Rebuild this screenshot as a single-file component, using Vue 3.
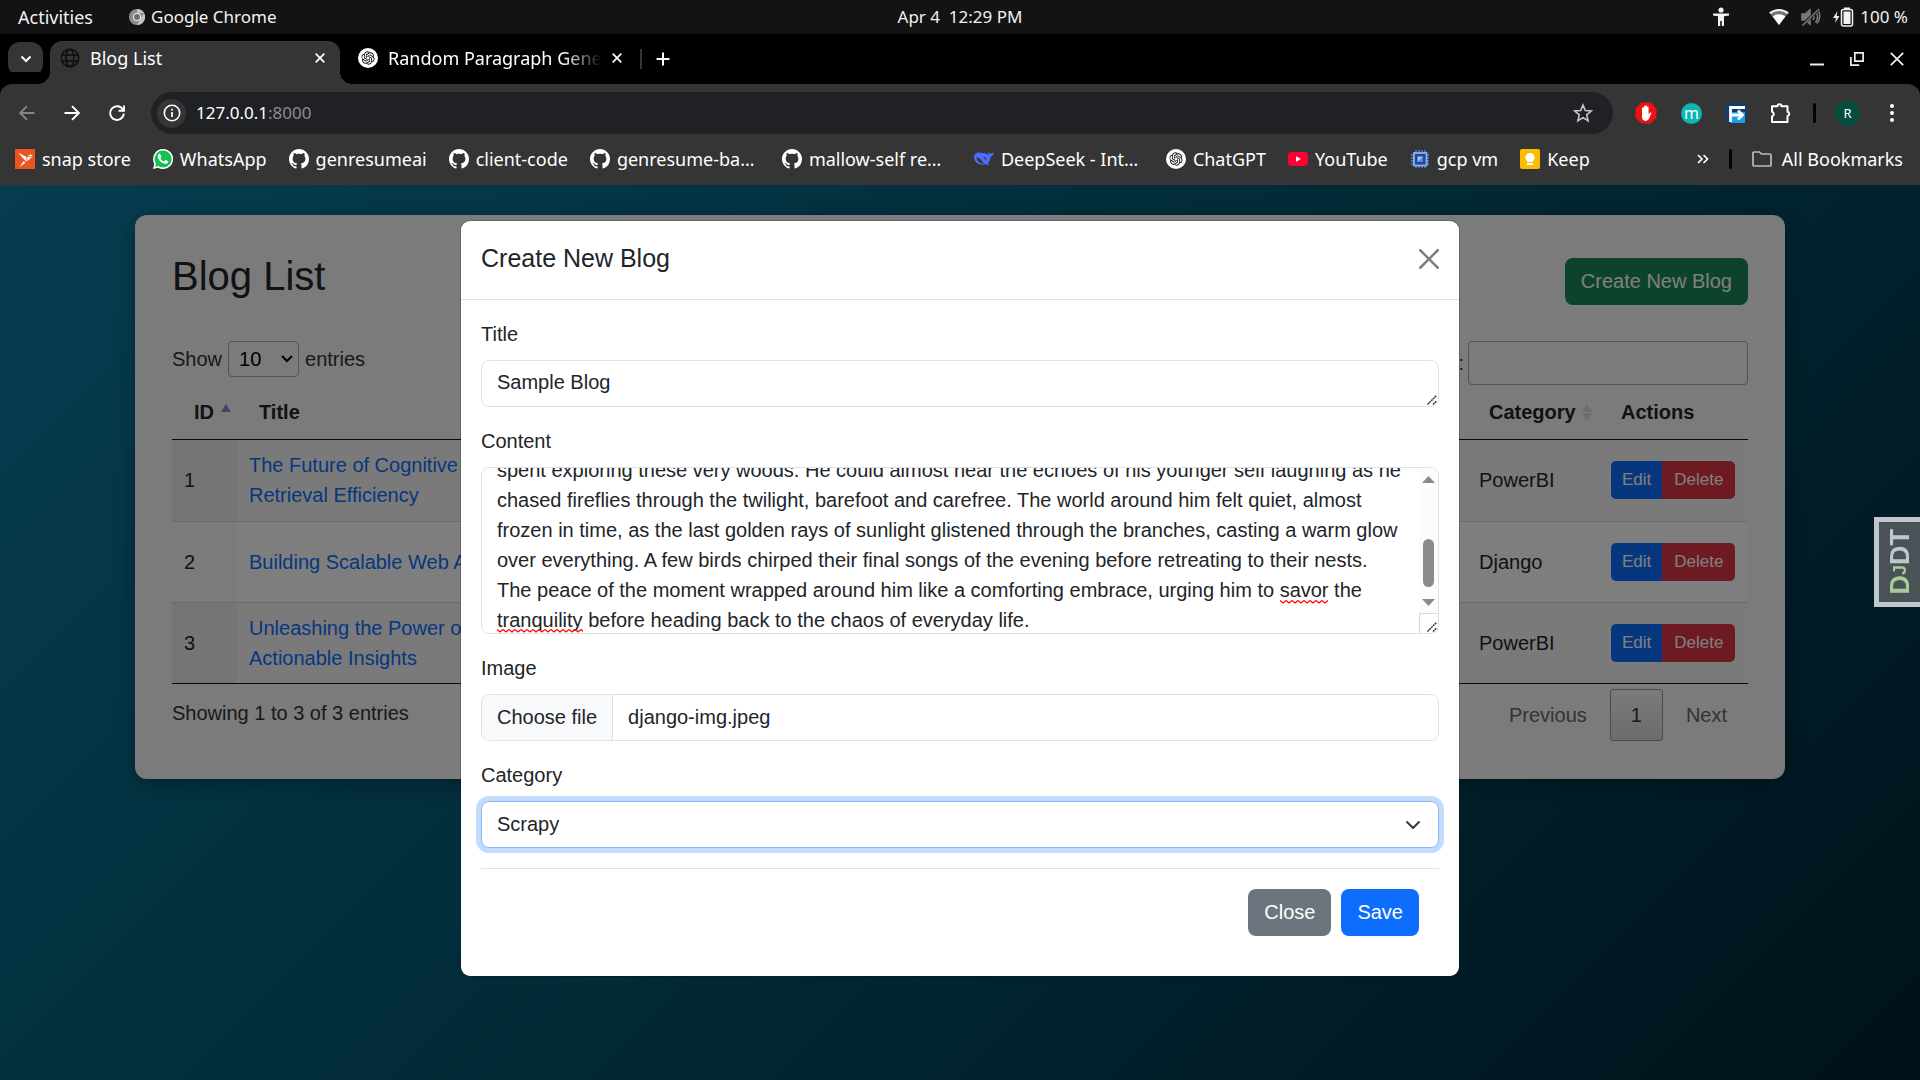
<script setup>
import { onMounted, ref } from 'vue'

const bookmarks = [
  { icon: 'snap', label: 'snap store' },
  { icon: 'whatsapp', label: 'WhatsApp' },
  { icon: 'github', label: 'genresumeai' },
  { icon: 'github', label: 'client-code' },
  { icon: 'github', label: 'genresume-ba…', long: true },
  { icon: 'github', label: 'mallow-self re…', long: true },
  { icon: 'deepseek', label: 'DeepSeek - Int…', long: true },
  { icon: 'openai', label: 'ChatGPT' },
  { icon: 'youtube', label: 'YouTube' },
  { icon: 'chip', label: 'gcp vm' },
  { icon: 'keep', label: 'Keep' },
]

const blogs = [
  { id: 1, title: 'The Future of Cognitive Retrieval Efficiency', category: 'PowerBI' },
  { id: 2, title: 'Building Scalable Web Apps', category: 'Django' },
  { id: 3, title: 'Unleashing the Power of Actionable Insights', category: 'PowerBI' },
]

const title = ref('Sample Blog')
const content = ref(
  'spent exploring these very woods. He could almost hear the echoes of his younger self laughing as he ' +
  'chased fireflies through the twilight, barefoot and carefree. The world around him felt quiet, almost ' +
  'frozen in time, as the last golden rays of sunlight glistened through the branches, casting a warm glow ' +
  'over everything. A few birds chirped their final songs of the evening before retreating to their nests. ' +
  'The peace of the moment wrapped around him like a comforting embrace, urging him to savor the ' +
  'tranquility before heading back to the chaos of everyday life.'
)
const category = ref('Scrapy')
const pageSize = ref('10')
const contentBox = ref(null)

onMounted(() => {
  contentBox.value.scrollTop = 19
})
</script>

<template>
  <svg class="sprite" aria-hidden="true">
    <symbol id="i-snap" viewBox="0 0 20 20">
      <rect width="20" height="20" fill="#e95420" />
      <path d="M3 3.500 11.500 8v5zM8.500 12.200 4.500 18l6-4.200zM12 7.300h5.800L16 5.200zM12.300 8.200 17 7.800l-4.700 4.500z" fill="#fff" />
    </symbol>
    <symbol id="i-whatsapp" viewBox="0 0 20 20">
      <path d="M10 0a10 10 0 0 0-8.700 14.900L0 20l5.200-1.300A10 10 0 1 0 10 0z" fill="#fff" />
      <path d="M10 1.600a8.400 8.400 0 0 0-7.100 12.900l-.8 3.200 3.300-.8A8.400 8.400 0 1 0 10 1.600z" fill="#12c24a" />
      <path d="M7.300 5.300c-.3-.5-.5-.5-.9-.5-.8 0-1.700 1-1.700 2.400 0 3 4 7.500 7.900 7.500 1.400 0 2.500-.9 2.600-1.800 0-.6 0-.7-.4-.9l-2-1c-.3-.1-.5 0-.7.200l-.8 1c-.2.200-.4.200-.6.100-1.400-.6-2.400-1.500-3.200-2.900-.1-.2 0-.4.100-.5l.7-.9c.1-.2.100-.3 0-.6z" fill="#fff" />
    </symbol>
    <symbol id="i-github" viewBox="0 0 16 16">
      <path fill="#fff" d="M8 0C3.580 0 0 3.580 0 8c0 3.540 2.290 6.530 5.470 7.590.4.070.55-.17.55-.38 0-.19-.01-.82-.01-1.490-2.010.37-2.530-.49-2.690-.94-.09-.23-.48-.94-.82-1.130-.28-.15-.68-.52-.01-.53.63-.01 1.080.58 1.230.82.72 1.210 1.870.87 2.330.66.070-.52.28-.87.51-1.070-1.780-.2-3.640-.89-3.640-3.950 0-.87.31-1.590.82-2.150-.08-.2-.36-1.020.08-2.120 0 0 .67-.21 2.200.82.64-.18 1.320-.27 2-.27s1.360.09 2 .27c1.530-1.040 2.200-.82 2.200-.82.44 1.100.16 1.920.08 2.120.51.56.82 1.270.82 2.150 0 3.070-1.870 3.750-3.650 3.950.29.25.54.73.54 1.480 0 1.070-.01 1.930-.01 2.200 0 .21.15.46.55.38A8.010 8.010 0 0 0 16 8c0-4.420-3.580-8-8-8z" />
    </symbol>
    <symbol id="i-deepseek" viewBox="0 0 20 20">
      <path d="M13 5.500c1.200.4 1.500-1.500 1.600-2.300 1 .9 1.300 1.300 2.300 1.200 1-.1 1.800-.5 2.900-1-.2 2.500-1.500 4.100-3.300 4.300-.2 2.600-1.100 4.800-2.700 6.500l1.800 1.400c-1.600.7-3 .2-4.100-.4-4.900 1.600-11.300-.8-11.500-7.200C0 5.500 2.500 3.400 5.500 3.600c1.700.1 2.900.9 3.900.4 1.400 0 2.500.5 3.600 1.500z" fill="#4d6bfe" />
      <path d="M2.500 8.300c2.800.2 4.300 2.300 5.700 4.300.8 1.100 1.500 1.700 2.200 2-4 .6-7.500-2.300-7.900-6.300zM9.500 7.800c1.700.2 2.900 1.500 3 3.100-1.400-.2-2.700-1.400-3-3.100z" fill="#353535" />
    </symbol>
    <symbol id="i-openai" viewBox="0 0 36 36">
      <circle cx="18" cy="18" r="18" fill="#fff" />
      <path transform="translate(6 6)" fill="#111" d="M22.2819 9.8211a5.9847 5.9847 0 0 0-.5157-4.9108 6.0462 6.0462 0 0 0-6.5098-2.9A6.0651 6.0651 0 0 0 4.9807 4.1818a5.9847 5.9847 0 0 0-3.9977 2.9 6.0462 6.0462 0 0 0 .7427 7.0966 5.98 5.98 0 0 0 .511 4.9107 6.051 6.051 0 0 0 6.5146 2.9001A5.9847 5.9847 0 0 0 13.2599 24a6.0557 6.0557 0 0 0 5.7718-4.2058 5.9894 5.9894 0 0 0 3.9977-2.9001 6.0557 6.0557 0 0 0-.7475-7.0729zm-9.022 12.6081a4.4755 4.4755 0 0 1-2.8764-1.0408l.1419-.0804 4.7783-2.7582a.7948.7948 0 0 0 .3927-.6813v-6.7369l2.02 1.1686a.071.071 0 0 1 .038.052v5.5826a4.504 4.504 0 0 1-4.4945 4.4944zm-9.6607-4.1254a4.4708 4.4708 0 0 1-.5346-3.0137l.142.0852 4.783 2.7582a.7712.7712 0 0 0 .7806 0l5.8428-3.3685v2.3324a.0804.0804 0 0 1-.0332.0615L9.74 19.9502a4.4992 4.4992 0 0 1-6.1408-1.6464zM2.3408 7.8956a4.485 4.485 0 0 1 2.3655-1.9728V11.6a.7664.7664 0 0 0 .3879.6765l5.8144 3.3543-2.0201 1.1685a.0757.0757 0 0 1-.071 0l-4.8303-2.7865A4.504 4.504 0 0 1 2.3408 7.872zm16.5963 3.8558L13.1038 8.364 15.1192 7.2a.0757.0757 0 0 1 .071 0l4.8303 2.7913a4.4944 4.4944 0 0 1-.6765 8.1042v-5.6772a.79.79 0 0 0-.407-.667zm2.0107-3.0231l-.142-.0852-4.7735-2.7818a.7759.7759 0 0 0-.7854 0L9.409 9.2297V6.8974a.0662.0662 0 0 1 .0284-.0615l4.8303-2.7866a4.4992 4.4992 0 0 1 6.6802 4.66zM8.3065 12.863l-2.02-1.1638a.0804.0804 0 0 1-.038-.0567V6.0742a4.4992 4.4992 0 0 1 7.3757-3.4537l-.142.0805L8.704 5.459a.7948.7948 0 0 0-.3927.6813zm1.0976-2.3654l2.602-1.4998 2.6069 1.4998v2.9994l-2.5974 1.4997-2.6067-1.4997Z" />
    </symbol>
    <symbol id="i-youtube" viewBox="0 0 20 20">
      <rect y="3" width="20" height="14" rx="3.500" fill="#ff0033" />
      <path d="M8 7.200v5.600l5-2.800z" fill="#fff" />
    </symbol>
    <symbol id="i-chip" viewBox="0 0 20 20">
      <path d="M6 1v3M9 1v3M12 1v3M15 1v3M6 16v3M9 16v3M12 16v3M15 16v3M1 6h3M1 9h3M1 12h3M1 15h3M16 6h3M16 9h3M16 12h3M16 15h3" stroke="#4f82e8" stroke-width="1.400" />
      <rect x="4" y="4" width="12.500" height="12.500" fill="#26488c" stroke="#8ab0f8" stroke-width="1.800" />
      <rect x="7.500" y="7.500" width="5.500" height="5.500" fill="#a8c5fb" />
      <path d="M13 7.500V13H7.500z" fill="#4f82e8" />
    </symbol>
    <symbol id="i-keep" viewBox="0 0 20 20">
      <rect width="20" height="20" rx="2" fill="#fbbc04" />
      <path d="M10 4a4.500 4.500 0 0 0-3 7.900V13h6v-1.100A4.500 4.500 0 0 0 10 4zM7 14h6v2H7z" fill="#fff" />
    </symbol>
  </svg>

  <div class="screen">
    <header class="system-bar">
      <button class="plain activities">Activities</button>
      <button class="plain app-menu">
        <svg width="16" height="16" viewBox="0 0 16 16"><circle cx="8" cy="8" r="8" fill="#8c8c8c" /><path d="M8 0a8 8 0 0 1 7 4H8zM15 4a8 8 0 0 1-7 12l4-7z" fill="#c4c4c4" /><circle cx="8" cy="8" r="4" fill="#eee" /><circle cx="8" cy="8" r="3" fill="#6d6d6d" /></svg>
        Google Chrome
      </button>
      <time class="clock">Apr 4&nbsp; 12:29 PM</time>
      <div class="tray">
        <svg class="a11y" width="16" height="20" viewBox="0 0 16 20" fill="#f2f2f2"><circle cx="8" cy="3" r="2.600" /><path d="M0 6.500h16v2l-5 .7V19H8.800v-5H7.200v5H5V9.200l-5-.7z" /></svg>
        <svg class="wifi" width="20" height="18" viewBox="0 0 20 18"><path d="M10 17 .8 5.300a14.500 14.500 0 0 1 18.400 0z" fill="#777" /><path d="M.8 5.300a14.500 14.500 0 0 1 18.400 0" fill="none" stroke="#f2f2f2" stroke-width="2" /><path d="M10 17 3.700 8.500a10 10 0 0 1 12.600 0z" fill="#fff" /></svg>
        <svg class="mute" width="20" height="20" viewBox="0 0 20 20" fill="none" stroke="#777" stroke-width="1.600"><path d="M1 7h3l5-4v14l-5-4H1z" fill="#777" /><path d="M12 7q2 3 0 6M14.500 4.500q4 5.500 0 11M17 2.500q4 7.500-1 14" /><path d="M1.500 18 18 2" stroke="#131313" stroke-width="3" /><path d="M1.500 18.500 18 2" /></svg>
        <svg width="21" height="20" viewBox="0 0 21 20"><path d="M4.500 4 0 11h3l-1 5 4.500-7H3.600z" fill="#f2f2f2" /><rect x="8.500" y="2.500" width="11" height="16.500" rx="2" fill="none" stroke="#f2f2f2" stroke-width="1.500" /><rect x="10.500" y="4.500" width="7" height="12.500" fill="#f2f2f2" /><path d="M11 .5h6v2h-6z" fill="#f2f2f2" /></svg>
        <span class="battery-text">100 %</span>
      </div>
    </header>

    <nav class="tab-strip" aria-label="Tabs">
      <button class="plain tab-search" aria-label="Search tabs"><svg width="12" height="8" viewBox="0 0 12 8"><path d="m1.500 1.500 4.500 4.500 4.500-4.500" fill="none" stroke="#fff" stroke-width="2" /></svg></button>
      <div class="tab active">
        <svg width="20" height="20" viewBox="0 0 20 20" fill="none" stroke="#0e0e0e" stroke-width="1.500"><circle cx="10" cy="10" r="8.700" /><ellipse cx="10" cy="10" rx="4" ry="8.700" /><path d="M2 7h16M2 13h16" /></svg>
        <span class="tab-title">Blog List</span>
        <button class="plain tab-close" aria-label="Close tab"><svg width="10" height="10" viewBox="0 0 10 10"><path d="m.7.7 8.600 8.600M9.300.7.7 9.300" stroke="#fff" stroke-width="1.700" /></svg></button>
      </div>
      <div class="tab">
        <svg width="20" height="20"><use href="#i-openai" /></svg>
        <span class="tab-title faded">Random Paragraph Gene</span>
        <button class="plain tab-close" aria-label="Close tab"><svg width="10" height="10" viewBox="0 0 10 10"><path d="m.7.7 8.600 8.600M9.300.7.7 9.300" stroke="#fff" stroke-width="1.700" /></svg></button>
      </div>
      <i class="tab-divider"></i>
      <button class="plain" aria-label="New tab"><svg width="14" height="14" viewBox="0 0 14 14"><path d="M7 .5v13M.5 7h13" stroke="#fff" stroke-width="2" /></svg></button>
      <div class="window-buttons">
        <button class="plain" aria-label="Minimize"><svg width="14" height="14" viewBox="0 0 14 14"><path d="M0 12.500h14" stroke="#eee" stroke-width="2" /></svg></button>
        <button class="plain" aria-label="Restore"><svg width="14" height="14" viewBox="0 0 14 14" fill="none" stroke="#eee" stroke-width="1.700"><path d="M4.800.9h8.300v8.300H4.800zM.9 5v8.100h8.300" /></svg></button>
        <button class="plain" aria-label="Close window"><svg width="14" height="14" viewBox="0 0 14 14"><path d="m.8.8 12.400 12.400M13.200.8.8 13.200" stroke="#eee" stroke-width="1.800" /></svg></button>
      </div>
    </nav>

    <div class="browser-bars">
      <div class="toolbar">
        <button class="plain" aria-label="Back"><svg width="16" height="16" viewBox="0 0 16 16" fill="none" stroke="#848484" stroke-width="1.900"><path d="M15.500 8H1.500M8 1.200 1.200 8 8 14.800" /></svg></button>
        <button class="plain" aria-label="Forward"><svg width="16" height="16" viewBox="0 0 16 16" fill="none" stroke="#fff" stroke-width="1.900"><path d="M.5 8h14M8 1.200 14.800 8 8 14.800" /></svg></button>
        <button class="plain" aria-label="Reload"><svg width="16" height="16" viewBox="0 0 16 16" fill="none" stroke="#fff" stroke-width="1.900"><path d="M13.800 4.500A6.800 6.800 0 1 0 14.800 8.700M15 .5v5.200H9.500" /></svg></button>
        <div class="omnibox">
          <span class="site-info"><svg width="18" height="18" viewBox="0 0 18 18"><circle cx="9" cy="9" r="7.700" fill="none" stroke="#fff" stroke-width="1.600" /><path d="M9 8v5M9 4.800v1.800" stroke="#fff" stroke-width="1.700" /></svg></span>
          <a class="url" href="#">127.0.0.1<span>:8000</span></a>
          <button class="plain star" aria-label="Bookmark this tab"><svg width="20" height="20" viewBox="0 0 20 20"><path d="m10 2 2.300 5.500 6 .5-4.600 3.900 1.400 5.800L10 14.600l-5.100 3.100 1.400-5.800L1.700 8l6-.5z" fill="none" stroke="#c7c7c7" stroke-width="1.600" /></svg></button>
        </div>
        <div class="extensions">
          <svg width="22" height="22" viewBox="0 0 22 22"><path d="M6.500.5h9l6 6v9l-6 6h-9l-6-6v-9z" fill="#ed1212" /><path d="M7 11V6q.8-1.200 1.600 0v4V4.400q.9-1.200 1.700 0V10 3.900q.9-1.200 1.700 0V10 5q.8-1.200 1.600 0v7.500l1.300-1.800q1.200-.6 1.500.3l-2.200 5.300Q13 19 10.800 19 7 18.500 7 15z" fill="#fff" /></svg>
          <span class="badge-m">m</span>
          <svg width="20" height="20" viewBox="0 0 20 20"><rect width="20" height="20" rx="2" fill="#123c70" /><path d="M5 9h14v11H5z" fill="#18a0ea" /><path d="M4.500 19V4.500H19M4.500 12H16M12 7.500l4.500 4.500-4.500 4.500" fill="none" stroke="#fff" stroke-width="2.800" /></svg>
          <svg width="22" height="22" viewBox="0 0 22 22"><path d="M2 4.200h5.500a2 2 0 0 1 4 0h6v5.500a2.200 2.200 0 0 1 0 4.300v6H2v-5.500a2.500 2.500 0 0 0 0-4.800z" fill="none" stroke="#fff" stroke-width="2" stroke-linejoin="round" /></svg>
        </div>
        <i class="bar-divider"></i>
        <span class="avatar">R</span>
        <button class="plain" aria-label="Menu"><svg width="6" height="18" viewBox="0 0 6 18" fill="#fff"><circle cx="3" cy="2" r="2" /><circle cx="3" cy="9" r="2" /><circle cx="3" cy="16" r="2" /></svg></button>
      </div>

      <div class="bookmarks">
        <a v-for="b in bookmarks" :key="b.label" href="#" class="bookmark" :class="{ long: b.long }">
          <svg width="20" height="20"><use :href="'#i-' + b.icon" /></svg>{{ b.label }}
        </a>
        <div class="bookmarks-end">
          <svg width="12" height="10" viewBox="0 0 12 10" fill="none" stroke="#fff" stroke-width="1.700"><path d="m1 1 4 4-4 4M6.500 1l4 4-4 4" /></svg>
          <i class="bar-divider"></i>
          <a href="#" class="bookmark all">
            <svg width="20" height="16" viewBox="0 0 20 16"><path d="M1 2q0-1 1-1h5.500l2 2H18q1 0 1 1v10q0 1-1 1H2q-1 0-1-1z" fill="none" stroke="#bbb" stroke-width="1.700" /></svg>All Bookmarks
          </a>
        </div>
      </div>
    </div>

    <main class="page">
      <section class="card">
        <div class="card-head">
          <h1>Blog List</h1>
          <button class="btn success">Create New Blog</button>
        </div>

        <div class="table-tools">
          <label class="length">Show
            <select v-model="pageSize" class="page-size"><option>10</option><option>25</option></select>
            entries
          </label>
          <label class="filter">Search:<input type="search" /></label>
        </div>

        <table>
          <colgroup><col class="c-id" /><col class="c-title" /><col /><col class="c-category" /><col class="c-actions" /></colgroup>
          <thead>
            <tr>
              <th scope="col">ID <i class="sort up"></i></th>
              <th scope="col">Title</th>
              <td></td>
              <th scope="col">Category <i class="sort both"></i></th>
              <th scope="col">Actions</th>
            </tr>
          </thead>
          <tbody>
            <tr v-for="blog in blogs" :key="blog.id">
              <td>{{ blog.id }}</td>
              <td><a href="#">{{ blog.title }}</a></td>
              <td></td>
              <td>{{ blog.category }}</td>
              <td>
                <div class="btn-group">
                  <button class="btn small primary">Edit</button>
                  <button class="btn small danger">Delete</button>
                </div>
              </td>
            </tr>
          </tbody>
        </table>

        <div class="table-foot">
          <p>Showing 1 to 3 of 3 entries</p>
          <div class="pager">
            <button>Previous</button>
            <button class="current">1</button>
            <button>Next</button>
          </div>
        </div>
      </section>

      <div class="backdrop">
        <div class="modal" role="dialog" aria-labelledby="modal-title">
          <div class="modal-head">
            <h2 id="modal-title">Create New Blog</h2>
            <button class="plain" aria-label="Close"><svg width="20" height="20" viewBox="0 0 16 16" fill="#7f7f7f"><path d="M.293.293a1 1 0 0 1 1.414 0L8 6.586 14.293.293a1 1 0 1 1 1.414 1.414L9.414 8l6.293 6.293a1 1 0 0 1-1.414 1.414L8 9.414l-6.293 6.293a1 1 0 0 1-1.414-1.414L6.586 8 .293 1.707a1 1 0 0 1 0-1.414z" /></svg></button>
          </div>
          <form class="modal-body" @submit.prevent>
            <div class="field">
              <label for="title">Title</label>
              <div class="area">
                <textarea id="title" v-model="title" class="control" rows="1"></textarea>
                <svg class="grip" width="10" height="10" viewBox="0 0 10 10"><path d="M.5 9.500 9.500.5M6 9.500 9.500 6" stroke="#333" stroke-width="1.500" stroke-dasharray="2 .6" /></svg>
              </div>
            </div>
            <div class="field">
              <label for="content">Content</label>
              <div class="area">
                <textarea id="content" ref="contentBox" v-model="content" class="control tall"></textarea>
                <i class="squiggle savor"></i>
                <i class="squiggle tranquility"></i>
                <div class="scrollbar">
                  <svg width="13" height="8" viewBox="0 0 13 8"><path d="M0 8 6.500 1 13 8z" fill="#8b8b8b" /></svg>
                  <i class="thumb"></i>
                  <svg width="13" height="8" viewBox="0 0 13 8"><path d="M0 0h13L6.500 7z" fill="#8b8b8b" /></svg>
                </div>
                <i class="corner"></i>
                <svg class="grip" width="10" height="10" viewBox="0 0 10 10"><path d="M.5 9.500 9.500.5M6 9.500 9.500 6" stroke="#333" stroke-width="1.500" stroke-dasharray="2 .6" /></svg>
              </div>
            </div>
            <div class="field">
              <label for="image">Image</label>
              <div class="file control">
                <span class="file-button">Choose file</span>
                <span class="file-name">django-img.jpeg</span>
                <input id="image" type="file" />
              </div>
            </div>
            <div class="field">
              <label for="category">Category</label>
              <select id="category" v-model="category" class="control focused"><option>Scrapy</option><option>Django</option><option>PowerBI</option></select>
            </div>
            <div class="modal-foot">
              <button type="button" class="btn secondary">Close</button>
              <button type="submit" class="btn primary">Save</button>
            </div>
          </form>
        </div>
      </div>

      <button class="debug-handle" aria-label="Show debug toolbar"><span><b>D<small>J</small></b>DT</span></button>
    </main>
  </div>
</template>

<style>
body { background: #001219; }
</style>

<style scoped>
* { box-sizing: border-box; }
.sprite { position: absolute; width: 0; height: 0; }
.screen {
  min-height: 100vh;
  display: flex;
  flex-direction: column;
  font: 18px/24px "Noto Sans", sans-serif;
  color: #fff;
}
.plain {
  display: flex;
  align-items: center;
  padding: 0;
  border: 0;
  background: none;
  color: inherit;
  font: inherit;
}
a { text-decoration: none; }
svg { flex: none; display: block; }

.system-bar {
  display: grid;
  grid-template-columns: auto auto 1fr;
  position: relative;
  align-items: center;
  height: 34px;
  padding: 0 12px 0 18px;
  background: #131313;
  color: #f2f2f2;
  font-size: 17px;
}
.activities { font-size: 18px; }
.app-menu { gap: 6px; margin-left: 36px; }
.clock { position: absolute; left: 0; right: 0; text-align: center; pointer-events: none; }
.tray { display: flex; align-items: center; justify-content: flex-end; }
.a11y { margin-right: 40px; }
.wifi { margin-right: 12px; }
.mute { margin-right: 12px; }
.battery-text { margin-left: 6px; }

.tab-strip {
  display: flex;
  align-items: center;
  height: 50px;
  padding: 0 14px 0 8px;
  background: #000;
}
.tab-search {
  justify-content: center;
  width: 35px;
  height: 34px;
  margin-right: 7px;
  border-radius: 12px;
  background: #353535;
}
.tab {
  display: flex;
  align-items: center;
  gap: 10px;
  position: relative;
  width: 290px;
  height: 43px;
  align-self: flex-end;
  padding: 0 15px 9px 10px;
}
.tab.active { background: #353535; border-radius: 12px 12px 0 0; }
.tab.active::before, .tab.active::after {
  content: "";
  position: absolute;
  bottom: 0;
  width: 12px;
  height: 12px;
}
.tab.active::before { left: -12px; background: radial-gradient(circle at 0 0, transparent 12px, #353535 12px); }
.tab.active::after { right: -12px; background: radial-gradient(circle at 100% 0, transparent 12px, #353535 12px); }
.tab:not(.active) { padding-left: 18px; padding-right: 8px; }
.tab-title { flex: 1; white-space: nowrap; }
.faded { mask-image: linear-gradient(90deg, #000 82%, transparent); }
.tab-divider { width: 2px; height: 20px; margin: 0 14px 0 10px; background: #353535; }
.window-buttons { display: flex; gap: 26px; margin-left: auto; padding-right: 2px; }

.browser-bars { background: #353535; border-radius: 12px 12px 0 0; box-shadow: 0 -12px 0 0 #000; }
.toolbar {
  display: flex;
  align-items: center;
  gap: 29px;
  height: 58px;
  padding: 0 25px 0 19px;
}
.omnibox {
  display: flex;
  align-items: center;
  flex: 1;
  height: 42px;
  margin-left: -3px;
  padding: 0 20px 0 6px;
  border-radius: 21px;
  background: #202124;
}
.site-info {
  display: grid;
  place-items: center;
  width: 29px;
  height: 29px;
  border-radius: 50%;
  background: #353535;
}
.url { margin-left: 10px; color: #fff; font-size: 17px; }
.url span { color: #8d8d8d; }
.star { margin-left: auto; }
.extensions { display: flex; align-items: center; gap: 24px; margin-left: -7px; }
.badge-m, .avatar {
  display: grid;
  place-items: center;
  width: 21px;
  height: 21px;
  border-radius: 50%;
  background: #0db5b5;
  line-height: 16px;
  font-size: 16px;
}
.avatar { width: 25px; height: 25px; margin-left: -10px; background: #054d40; font-size: 13px; }
.bar-divider { width: 3px; height: 20px; border-radius: 2px; background: #000; }
.toolbar .bar-divider { margin-left: -8px; }
.bookmarks {
  display: flex;
  align-items: center;
  gap: 22px;
  height: 43px;
  padding: 0 17px 10px 15px;
}
.bookmark { display: flex; align-items: center; gap: 7px; color: #fff; white-space: nowrap; }
.bookmark.long { min-width: 170px; }
.bookmark.all { gap: 10px; }
.bookmarks-end { display: flex; align-items: center; gap: 20px; margin-left: auto; }

.page {
  flex: 1;
  position: relative;
  padding: 30px 20px;
  background: linear-gradient(135deg, #0a7ca0 0%, #04546e 50%, #002434 100%);
  font: 20px/30px "Liberation Sans", Arial, sans-serif;
  color: #212529;
}
.card {
  max-width: 1650px;
  margin: 0 auto;
  padding: 37px 37px 38px;
  border-radius: 12px;
  background: #f6f6f6;
  box-shadow: 0 5px 20px rgba(0, 0, 0, .3);
}
.card-head { display: flex; align-items: center; justify-content: space-between; margin-bottom: 31px; }
h1 { margin: 0 0 10px; font-size: 40px; line-height: 48px; font-weight: 400; }
.btn {
  height: 47px;
  padding: 0 16px;
  border: 0;
  border-radius: 8px;
  color: #fff;
  font: 20px "Liberation Sans", Arial, sans-serif;
}
.success { background: #198754; }
.primary { background: #0d6efd; }
.secondary { background: #6c757d; }
.danger { background: #dc3545; }
.btn-group { display: flex; }
.btn.small { height: 38px; padding: 0 11px; border-radius: 5px; font-size: 17px; }
.btn.small:first-child { border-radius: 5px 0 0 5px; }
.btn.small:last-child { border-radius: 0 5px 5px 0; padding: 0 12px; }

.table-tools { display: flex; justify-content: space-between; align-items: flex-start; color: #333; }
.length { display: flex; align-items: center; gap: 6px; line-height: 28px; }
.filter { display: flex; align-items: center; gap: 4px; }
.filter input { width: 280px; height: 44px; border: 1px solid #aaa; border-radius: 4px; background: transparent; }
select { appearance: none; background-repeat: no-repeat; }
.page-size {
  width: 71px;
  height: 36px;
  padding: 0 10px;
  border: 1px solid #aaa;
  border-radius: 4px;
  color: #000;
  font: inherit;
  background-color: transparent;
  background-image: url("data:image/svg+xml,%3Csvg xmlns='http://www.w3.org/2000/svg' width='12' height='8' viewBox='0 0 12 8'%3E%3Cpath d='m1 1 5 5 5-5' fill='none' stroke='black' stroke-width='2'/%3E%3C/svg%3E");
  background-position: right 5px center;
}
table { width: 100%; table-layout: fixed; border-collapse: separate; border-spacing: 0; border-bottom: 1px solid #111; }
.c-id { width: 65px; }
.c-title { width: 280px; }
.c-category { width: 132px; }
.c-actions { width: 149px; }
thead th, thead td { height: 55px; padding: 0 0 1px 22px; border-bottom: 1px solid #111; text-align: left; white-space: nowrap; }
tbody td { height: 81px; padding: 0 12px 1px; background: #fdfdfd; }
tbody tr:nth-child(odd) td { background: #f5f5f5; }
tbody tr td:first-child { background: #f7f7f7; }
tbody tr:nth-child(odd) td:first-child { background: #ebebeb; }
tbody tr + tr td { border-top: 1px solid #d6d6d6; }
tbody a { color: #0d6efd; }
.sort { display: inline-block; position: relative; width: 10px; height: 18px; vertical-align: -1px; }
.sort::before, .sort::after { content: ""; position: absolute; left: 1px; border: 5px solid transparent; }
.sort::before { top: -3px; border-bottom: 8px solid #dcdcdc; }
.sort.up::before { border-bottom-color: #8c84d0; }
.sort.both::after { bottom: -6px; border-top: 8px solid #dcdcdc; }
.table-foot { display: flex; justify-content: space-between; padding-top: 5px; }
.table-foot p { margin: 9px 0 0; color: #333; }
.pager { display: flex; gap: 2px; }
.pager button {
  height: 52px;
  padding: 0 20px;
  border: 1px solid transparent;
  border-radius: 3px;
  background: none;
  color: #666;
  font: inherit;
}
.pager .current { border-color: #979797; background: linear-gradient(#f6f6f6, #d8d8d8); color: #333; }

.backdrop {
  position: absolute;
  inset: 0;
  padding-top: 36px;
  background: rgba(0, 0, 0, .5);
}
.modal {
  width: 998px;
  max-width: calc(100% - 40px);
  margin: 0 auto;
  border-radius: 9px;
  background: #fff;
  box-shadow: 0 0 0 1px rgba(0, 0, 0, .175);
}
.modal-head {
  display: flex;
  align-items: center;
  justify-content: space-between;
  height: 79px;
  padding: 0 20px 2px;
  border-bottom: 1px solid #dee2e6;
}
h2 { margin: 0 0 2px; font-size: 25px; line-height: 38px; font-weight: 400; }
.modal-body { padding: 19px 20px 20px; }
.field { display: flex; flex-direction: column; gap: 11px; margin-bottom: 19px; }
.area { position: relative; }
.control {
  display: block;
  width: 100%;
  height: 47px;
  padding: 6px 15px;
  border: 1px solid #dee2e6;
  border-radius: 8px;
  background-color: #fff;
  color: #212529;
  font: inherit;
  resize: none;
  outline: 0;
  overflow: hidden;
}
.tall { height: 167px; padding-right: 33px; }
.grip { position: absolute; right: 2px; bottom: 2px; }
.squiggle {
  position: absolute;
  height: 4px;
  background: url("data:image/svg+xml,%3Csvg xmlns='http://www.w3.org/2000/svg' width='6' height='4'%3E%3Cpath d='M0 .5 3 3 6 .5' fill='none' stroke='red' stroke-width='1.300'/%3E%3C/svg%3E") repeat-x;
}
.savor { left: 799px; top: 133px; width: 48px; }
.tranquility { left: 16px; top: 162px; width: 86px; }
.scrollbar {
  position: absolute;
  top: 1px;
  right: 1px;
  display: flex;
  flex-direction: column;
  align-items: center;
  justify-content: space-between;
  width: 19px;
  height: 146px;
  padding: 7px 0;
  border-top-right-radius: 7px;
  background: #fcfcfc;
}
.thumb { width: 11px; height: 48px; margin-top: 44px; border-radius: 6px; background: #8b8b8b; }
.corner { position: absolute; right: 1px; bottom: 1px; width: 19px; height: 20px; border: solid #d9d9d9; border-width: 1px 0 0 1px; border-bottom-right-radius: 7px; }
.file { display: flex; position: relative; padding: 0; }
.file-button { padding: 7px 15px; border-right: 1px solid #dee2e6; background: #f8f9fa; }
.file-name { padding: 7px 15px; }
.file input { position: absolute; inset: 0; opacity: 0; }
.focused {
  padding: 0 15px 2px;
  border-color: #86b7fe;
  box-shadow: 0 0 0 5px #c2dbfe;
  background-image: url("data:image/svg+xml,%3Csvg xmlns='http://www.w3.org/2000/svg' width='20' height='20' viewBox='0 0 16 16'%3E%3Cpath fill='none' stroke='%23343a40' stroke-linecap='round' stroke-linejoin='round' stroke-width='2' d='m2 5 6 6 6-6'/%3E%3C/svg%3E");
  background-size: 16px 16px;
  background-position: right 17px center;
}
.modal-foot {
  display: flex;
  justify-content: flex-end;
  gap: 10px;
  margin-top: 20px;
  padding: 20px;
  border-top: 1px solid #dee2e6;
}
.field:nth-last-child(2) { margin-bottom: 0; }
.debug-handle {
  position: absolute;
  top: 332px;
  right: 0;
  display: grid;
  place-items: center;
  width: 46px;
  height: 90px;
  padding: 0;
  border: 5px solid #bfc7ca;
  border-right-width: 0;
  background: #495256;
  color: #bfc7ca;
  font: bold 27px/32px "Liberation Sans", Arial, sans-serif;
}
.debug-handle span { writing-mode: vertical-rl; transform: rotate(180deg); }
.debug-handle b { color: #a9cc97; }
.debug-handle small { font-size: 18px; }
</style>
